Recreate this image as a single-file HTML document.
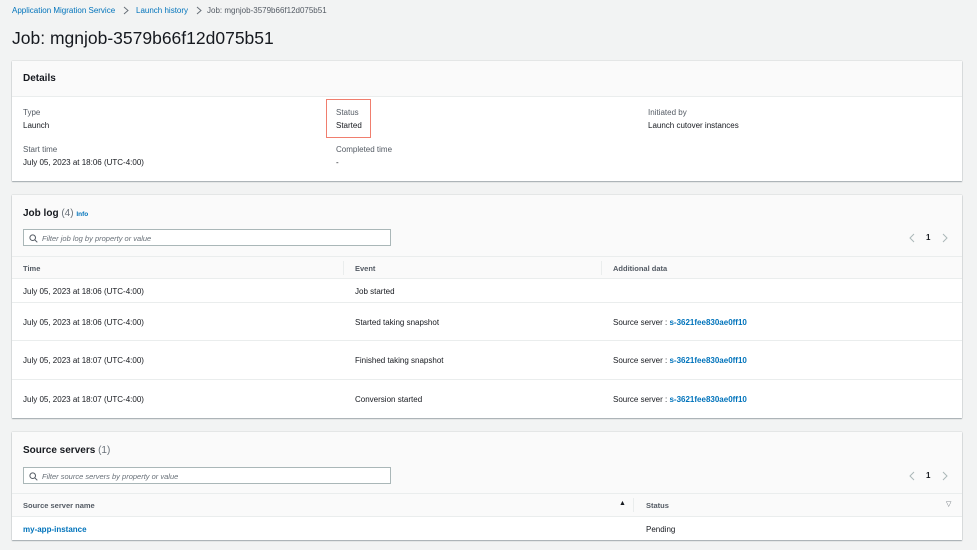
<!DOCTYPE html>
<html><head><meta charset="utf-8"><style>
*{margin:0;padding:0;box-sizing:border-box}
body{width:977px;height:550px;background:#f2f3f3;font-family:"Liberation Sans",Arial,sans-serif;color:#16191f;position:relative;overflow:hidden;font-size:8px}
.a{position:absolute;white-space:nowrap}
.link{color:#0073bb}
.panel{position:absolute;left:12px;width:950px;background:#fff;box-shadow:0 1px 1px rgba(0,28,36,.3),0 0 1px rgba(0,28,36,.3)}
.hdr{position:absolute;left:0;top:0;width:100%;background:#fafafa;border-bottom:1px solid #eaeded}
.h2{font-weight:bold;font-size:10px}
.lbl{color:#545b64;font-size:8px}
.search{position:absolute;border:1px solid #aab7b8;background:#fff;height:17px}
.search span{position:absolute;left:18px;top:4px;font-style:italic;color:#687078;font-size:7.5px}
.row{position:absolute;left:0;width:100%;border-bottom:1px solid #eaeded}
.th{font-weight:bold;color:#545b64;font-size:7.5px}
</style></head><body>
<div class="a link" style="left:12px;top:6px;font-size:8px">Application Migration Service</div>
<svg class="a" style="left:123px;top:6px" width="6" height="9" viewBox="0 0 6 9"><path d="M1 1l4 3.5L1 8" fill="none" stroke="#687078" stroke-width="1"/></svg>
<div class="a link" style="left:136px;top:6px;font-size:8px">Launch history</div>
<svg class="a" style="left:196px;top:6px" width="6" height="9" viewBox="0 0 6 9"><path d="M1 1l4 3.5L1 8" fill="none" stroke="#687078" stroke-width="1"/></svg>
<div class="a" style="left:207px;top:6px;font-size:8px;color:#545b64">Job: mgnjob-3579b66f12d075b51</div>
<div class="a" style="left:12px;top:28px;font-size:17.5px">Job: mgnjob-3579b66f12d075b51</div>

<div class="panel" style="top:61px;height:120px">
 <div class="hdr" style="height:36px"><div class="a h2" style="left:11px;top:12px">Details</div></div>
 <div class="a lbl" style="left:11px;top:47px">Type</div>
 <div class="a" style="left:11px;top:60px">Launch</div>
 <div class="a lbl" style="left:11px;top:84px">Start time</div>
 <div class="a" style="left:11px;top:97px">July 05, 2023 at 18:06 (UTC-4:00)</div>
 <div class="a" style="left:314px;top:38px;width:45px;height:39px;border:1.5px solid #f07e6e"></div>
 <div class="a lbl" style="left:324px;top:47px">Status</div>
 <div class="a" style="left:324px;top:60px">Started</div>
 <div class="a lbl" style="left:324px;top:84px">Completed time</div>
 <div class="a" style="left:324px;top:97px">-</div>
 <div class="a lbl" style="left:636px;top:47px">Initiated by</div>
 <div class="a" style="left:636px;top:60px">Launch cutover instances</div>
</div>

<div class="panel" style="top:195px;height:223px">
 <div class="hdr" style="height:62px">
  <div class="a h2" style="left:11px;top:13px">Job log <span style="font-weight:normal;color:#687078">(4)</span> <span class="link" style="font-size:6.5px">Info</span></div>
  <div class="search" style="left:11px;top:34px;width:368px"><svg class="a" style="left:5px;top:4px" width="9" height="9" viewBox="0 0 9 9"><circle cx="3.7" cy="3.7" r="2.8" fill="none" stroke="#545b64" stroke-width="1"/><path d="M5.8 5.8L8.3 8.3" stroke="#545b64" stroke-width="1"/></svg><span>Filter job log by property or value</span></div>
  <svg class="a" style="left:897px;top:38px" width="6" height="10" viewBox="0 0 6 10"><path d="M5 1L1 5l4 4" fill="none" stroke="#aab7b8" stroke-width="1"/></svg>
  <div class="a" style="left:914px;top:38px;font-weight:bold;font-size:8px">1</div>
  <svg class="a" style="left:930px;top:38px" width="6" height="10" viewBox="0 0 6 10"><path d="M1 1l4 4-4 4" fill="none" stroke="#aab7b8" stroke-width="1"/></svg>
 </div>
 <div class="row" style="top:62px;height:22px;background:#fafafa">
  <div class="a th" style="left:11px;top:7px">Time</div>
  <div class="a" style="left:331px;top:4px;height:14px;border-left:1px solid #eaeded"></div>
  <div class="a th" style="left:343px;top:7px">Event</div>
  <div class="a" style="left:589px;top:4px;height:14px;border-left:1px solid #eaeded"></div>
  <div class="a th" style="left:601px;top:7px">Additional data</div>
 </div>
 <div class="row" style="top:84px;height:24px"><div class="a" style="left:11px;top:8px">July 05, 2023 at 18:06 (UTC-4:00)</div><div class="a" style="left:343px;top:8px">Job started</div></div>
 <div class="row" style="top:108px;height:38px"><div class="a" style="left:11px;top:15px">July 05, 2023 at 18:06 (UTC-4:00)</div><div class="a" style="left:343px;top:15px">Started taking snapshot</div><div class="a" style="left:601px;top:15px">Source server : <span class="link" style="font-weight:bold">s-3621fee830ae0ff10</span></div></div>
 <div class="row" style="top:146px;height:39px"><div class="a" style="left:11px;top:15px">July 05, 2023 at 18:07 (UTC-4:00)</div><div class="a" style="left:343px;top:15px">Finished taking snapshot</div><div class="a" style="left:601px;top:15px">Source server : <span class="link" style="font-weight:bold">s-3621fee830ae0ff10</span></div></div>
 <div class="row" style="top:185px;height:38px;border:none"><div class="a" style="left:11px;top:15px">July 05, 2023 at 18:07 (UTC-4:00)</div><div class="a" style="left:343px;top:15px">Conversion started</div><div class="a" style="left:601px;top:15px">Source server : <span class="link" style="font-weight:bold">s-3621fee830ae0ff10</span></div></div>
</div>

<div class="panel" style="top:432px;height:108px">
 <div class="hdr" style="height:62px">
  <div class="a h2" style="left:11px;top:13px">Source servers <span style="font-weight:normal;color:#687078">(1)</span></div>
  <div class="search" style="left:11px;top:35px;width:368px"><svg class="a" style="left:5px;top:4px" width="9" height="9" viewBox="0 0 9 9"><circle cx="3.7" cy="3.7" r="2.8" fill="none" stroke="#545b64" stroke-width="1"/><path d="M5.8 5.8L8.3 8.3" stroke="#545b64" stroke-width="1"/></svg><span>Filter source servers by property or value</span></div>
  <svg class="a" style="left:897px;top:39px" width="6" height="10" viewBox="0 0 6 10"><path d="M5 1L1 5l4 4" fill="none" stroke="#aab7b8" stroke-width="1"/></svg>
  <div class="a" style="left:914px;top:39px;font-weight:bold;font-size:8px">1</div>
  <svg class="a" style="left:930px;top:39px" width="6" height="10" viewBox="0 0 6 10"><path d="M1 1l4 4-4 4" fill="none" stroke="#aab7b8" stroke-width="1"/></svg>
 </div>
 <div class="row" style="top:62px;height:23px;background:#fafafa">
  <div class="a th" style="left:11px;top:7px">Source server name</div>
  <div class="a" style="left:607px;top:6px;font-size:7px">▲</div>
  <div class="a" style="left:621px;top:4px;height:14px;border-left:1px solid #eaeded"></div>
  <div class="a th" style="left:634px;top:7px">Status</div>
  <div class="a" style="left:934px;top:6px;font-size:7px;color:#687078">▽</div>
 </div>
 <div class="row" style="top:85px;height:23px;border:none"><div class="a link" style="left:11px;top:8px;font-weight:bold">my-app-instance</div><div class="a" style="left:634px;top:8px">Pending</div></div>
</div>
</body></html>
